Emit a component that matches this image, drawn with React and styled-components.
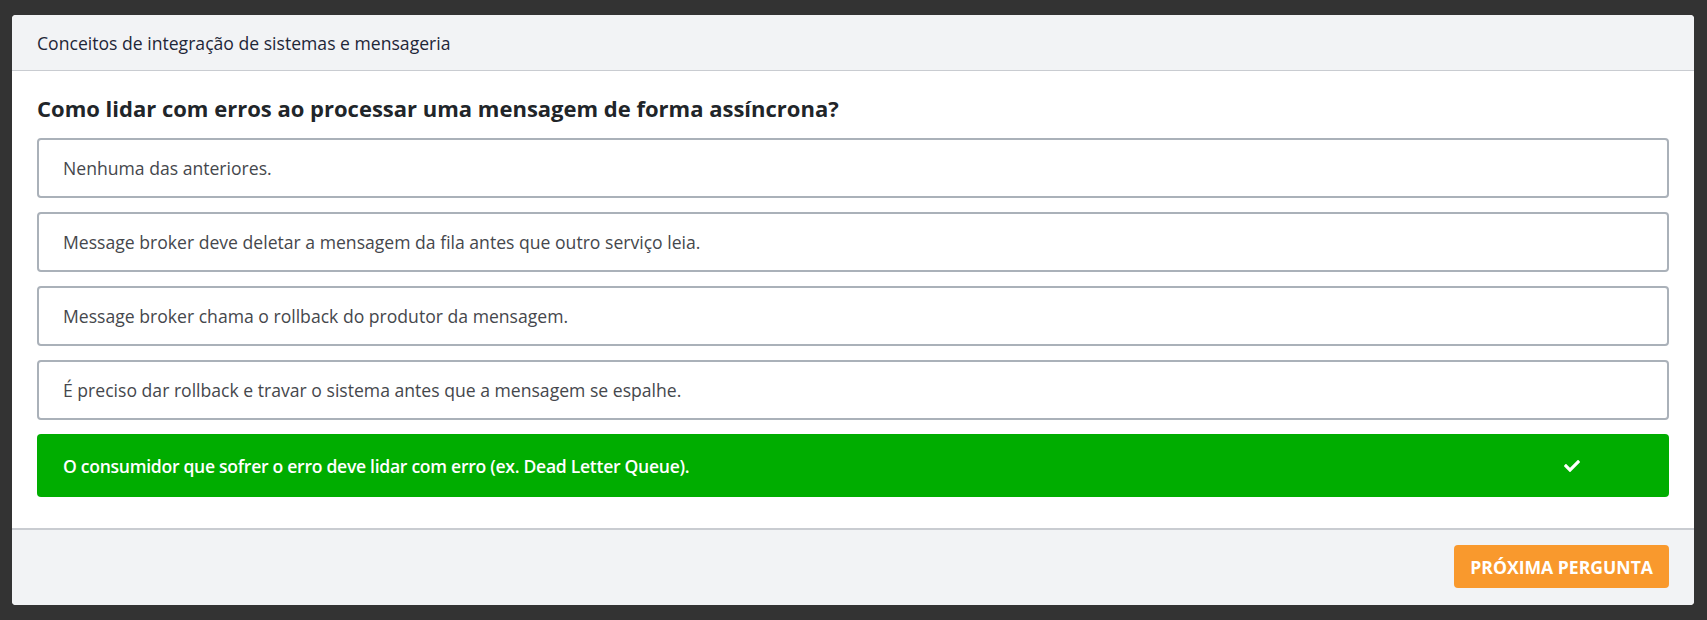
import React from "react";
import styled, { createGlobalStyle } from "styled-components";
import { FaCheck } from "react-icons/fa";

const GlobalStyle = createGlobalStyle`
  html, body {
    margin: 0;
    padding: 0;
    background: #333333;
  }
  * { box-sizing: border-box; }
`;

const Page = styled.div`
  min-height: 620px;
  padding: 15px 13px 18px 12px;
  font-family: "Open Sans", "Noto Sans", Arial, sans-serif;
  font-size: 17.6px;
`;

const Card = styled.div`
  background: #ffffff;
  border-radius: 4px;
  overflow: hidden;
`;

const CardHeader = styled.div`
  height: 56px;
  display: flex;
  align-items: center;
  padding: 0 25px;
  background: #f2f3f5;
  border-bottom: 1px solid #c9ccd1;
  color: #1e2638;
`;

const CardBody = styled.div`
  padding: 22px 25px 31px;
`;

const Question = styled.h2`
  margin: 0 0 14px;
  font-size: 22px;
  font-weight: 700;
  line-height: 31px;
  color: #212529;
`;

const Options = styled.div`
  display: flex;
  flex-direction: column;
  gap: 14px;
`;

const Option = styled.div`
  height: ${(p) => (p.correct ? "63px" : "60px")};
  display: flex;
  align-items: center;
  justify-content: space-between;
  padding: 0 89px 0 24px;
  border-radius: 4px;
  border: ${(p) => (p.correct ? "none" : "2px solid #aab1b9")};
  background: ${(p) => (p.correct ? "#00ad00" : "#ffffff")};
  color: ${(p) => (p.correct ? "#ffffff" : "#45474c")};
  font-weight: ${(p) => (p.correct ? 600 : 400)};
  letter-spacing: ${(p) => (p.correct ? "-0.3px" : "normal")};
  padding-left: ${(p) => (p.correct ? "26px" : "24px")};
`;

const CheckMark = styled(FaCheck)`
  width: 16px;
  height: 16px;
  color: #ffffff;
`;

const CardFooter = styled.div`
  display: flex;
  justify-content: flex-end;
  padding: 15px 25px 17px;
  background: #f2f3f5;
  border-top: 2px solid #c9ccd1;
`;

const NextButton = styled.button`
  height: 43px;
  padding: 0 16px;
  border: none;
  border-radius: 4px;
  background: #f9992d;
  color: #ffffff;
  font-family: inherit;
  font-size: 17.6px;
  font-weight: 700;
  cursor: pointer;
`;

const options = [
  { text: "Nenhuma das anteriores." },
  { text: "Message broker deve deletar a mensagem da fila antes que outro serviço leia." },
  { text: "Message broker chama o rollback do produtor da mensagem." },
  { text: "É preciso dar rollback e travar o sistema antes que a mensagem se espalhe." },
  { text: "O consumidor que sofrer o erro deve lidar com erro (ex. Dead Letter Queue).", correct: true },
];

export default function App() {
  return (
    <>
      <GlobalStyle />
      <Page>
        <Card>
          <CardHeader>Conceitos de integração de sistemas e mensageria</CardHeader>
          <CardBody>
            <Question>Como lidar com erros ao processar uma mensagem de forma assíncrona?</Question>
            <Options>
              {options.map((o) => (
                <Option key={o.text} correct={o.correct}>
                  <span>{o.text}</span>
                  {o.correct && <CheckMark />}
                </Option>
              ))}
            </Options>
          </CardBody>
          <CardFooter>
            <NextButton>PRÓXIMA PERGUNTA</NextButton>
          </CardFooter>
        </Card>
      </Page>
    </>
  );
}
